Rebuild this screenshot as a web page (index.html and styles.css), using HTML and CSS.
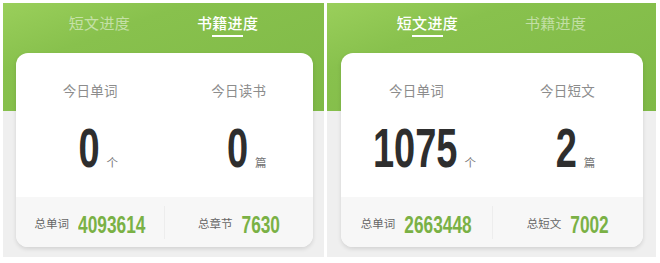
FILE: index.html
```html
<!DOCTYPE html>
<html lang="zh">
<head>
<meta charset="utf-8">
<link rel="stylesheet" href="styles.css">
</head>
<body>
<div class="wrap">
  <div class="panel panel-left">
    <div class="tabs">
      <div class="tab">短文进度</div>
      <div class="tab active">书籍进度</div>
    </div>
    <div class="card">
      <div class="today">
        <div class="col">
          <div class="label">今日单词</div>
          <div class="numrow"><span class="big">0</span><span class="unit">个</span></div>
        </div>
        <div class="col">
          <div class="label">今日读书</div>
          <div class="numrow"><span class="big">0</span><span class="unit">篇</span></div>
        </div>
      </div>
      <div class="totals">
        <div class="tcol"><span class="tlabel">总单词</span><span class="tval">4093614</span></div>
        <div class="divider"></div>
        <div class="tcol"><span class="tlabel">总章节</span><span class="tval">7630</span></div>
      </div>
    </div>
  </div>
  <div class="panel panel-right">
    <div class="tabs">
      <div class="tab active">短文进度</div>
      <div class="tab">书籍进度</div>
    </div>
    <div class="card">
      <div class="today">
        <div class="col">
          <div class="label">今日单词</div>
          <div class="numrow"><span class="big">1075</span><span class="unit">个</span></div>
        </div>
        <div class="col">
          <div class="label">今日短文</div>
          <div class="numrow"><span class="big">2</span><span class="unit">篇</span></div>
        </div>
      </div>
      <div class="totals">
        <div class="tcol"><span class="tlabel">总单词</span><span class="tval">2663448</span></div>
        <div class="divider"></div>
        <div class="tcol"><span class="tlabel">总短文</span><span class="tval">7002</span></div>
      </div>
    </div>
  </div>
</div>
</body>
</html>
```

FILE: styles.css
```css
html, body {
  margin: 0;
  padding: 0;
  background: #ffffff;
}
body {
  font-family: "Noto Sans CJK SC", "Noto Sans", sans-serif;
  width: 660px;
  height: 263px;
  overflow: hidden;
}
.wrap {
  display: flex;
  gap: 3px;
  padding: 3px 0 0 3px;
}
.panel {
  height: 254px;
  display: flex;
  flex-direction: column;
  background:
    linear-gradient(160deg, #9acf5b 0%, #88c14d 30%, #7fb947 100%) top left / 100% 108px no-repeat,
    #efefef;
}
.panel-left { width: 321px; }
.panel-right { width: 329px; }

.tabs {
  display: flex;
  justify-content: center;
  gap: 67px;
  padding-top: 8px;
  box-sizing: border-box;
  height: 50px;
}
.tab {
  font-size: 15px;
  line-height: 23px;
  height: 26px;
  color: rgba(255, 255, 255, 0.5);
  letter-spacing: 0.3px;
  display: flex;
  flex-direction: column;
  align-items: center;
}
.tab.active {
  color: #ffffff;
  font-weight: 500;
}
.tab.active::after {
  content: "";
  display: block;
  width: 31px;
  height: 3px;
  background: #ffffff;
  margin-top: 1px;
}

.card {
  margin: 0 11px 0 13px;
  height: 194px;
  background: #ffffff;
  border-radius: 12px;
  box-shadow: 0 2px 4px rgba(0, 0, 0, 0.12);
  display: flex;
  flex-direction: column;
  overflow: hidden;
}
.panel-right .card {
  margin: 0 13px 0 14px;
}
.today {
  height: 144px;
  display: flex;
}
.col {
  flex: 1;
  display: flex;
  flex-direction: column;
  align-items: center;
  padding-top: 27px;
}
.label {
  font-size: 13.5px;
  line-height: 20px;
  color: #8c8c8c;
  letter-spacing: 0.2px;
}
.numrow {
  margin-top: 35px;
  display: flex;
  align-items: baseline;
  padding-left: 16px;
}
.big {
  display: inline-block;
  font-family: "Liberation Sans", "DejaVu Sans", sans-serif;
  font-weight: 700;
  font-size: 38px;
  line-height: 38px;
  color: #2e2e2e;
  transform: scaleY(1.48);
  transform-origin: 50% 85%;
}
.unit {
  font-size: 11.5px;
  color: #777777;
  margin-left: 7px;
}

.totals {
  flex: 1;
  background: #f7f7f7;
  display: flex;
  align-items: center;
}
.tcol {
  flex: 1;
  display: flex;
  align-items: center;
  justify-content: center;
  padding-top: 9px;
}
.divider {
  width: 1px;
  height: 33px;
  background: #ededed;
}
.tlabel {
  font-size: 11.5px;
  line-height: 16px;
  color: #666666;
  margin-right: 9px;
  margin-top: -7px;
}
.tval {
  display: inline-block;
  font-family: "Liberation Sans", "DejaVu Sans", sans-serif;
  font-weight: 700;
  font-size: 17.3px;
  line-height: 20px;
  color: #7ab145;
  transform: scaleY(1.37);
  transform-origin: 50% 80%;
}
```
